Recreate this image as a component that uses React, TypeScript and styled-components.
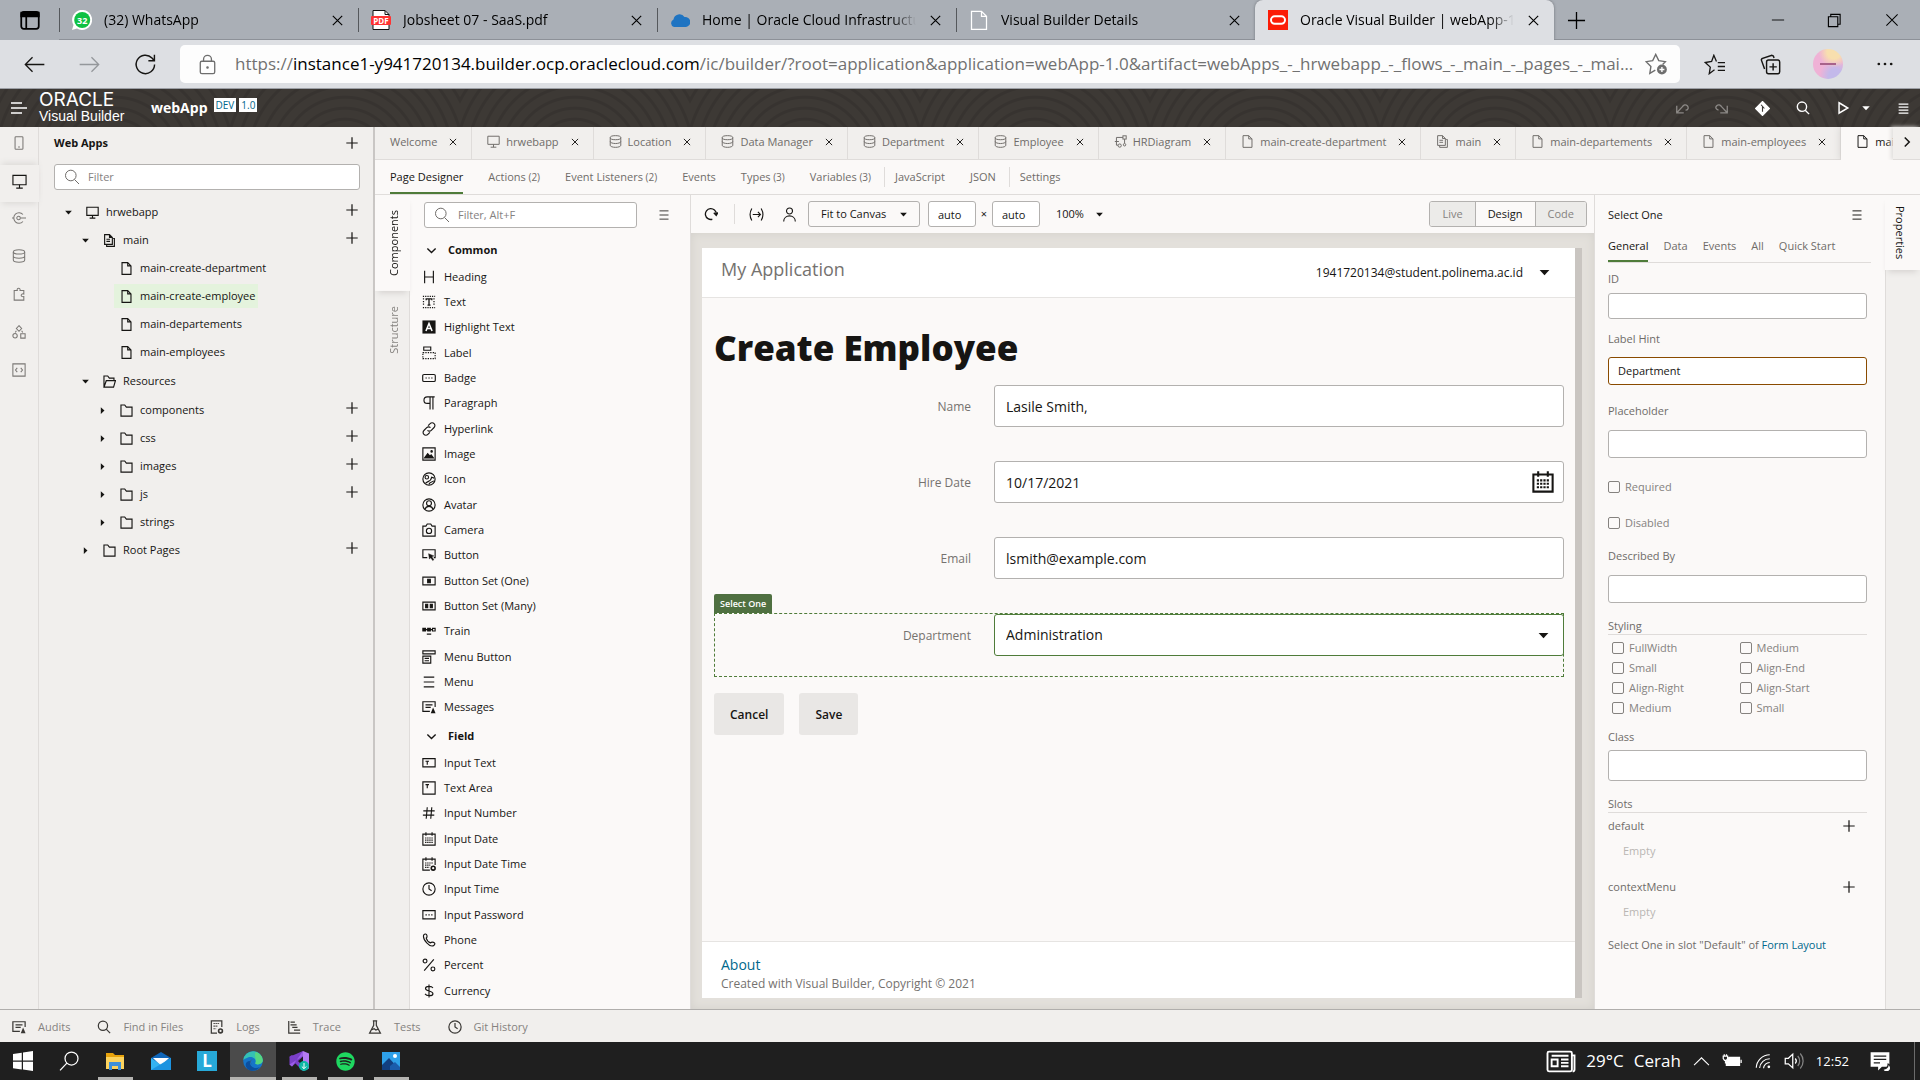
import React, { ReactNode } from "react";
import styled, { createGlobalStyle, css } from "styled-components";
import { FaSpotify } from "react-icons/fa";

const c = {
  ink: "#161513",
  muted: "#6f6c69",
  faint: "#b9b6b3",
  panel: "#f1efed",
  surface: "#fbf9f8",
  line: "#dfdcda",
  edge: "#b3b1af",
  green: "#4f7c3a",
  link: "#00688c",
  chrome: "#aaafb6",
  bar: "#dddfe3",
};

const Global = createGlobalStyle`
  *, *::before, *::after { box-sizing: border-box; }
  body { margin: 0; font: 11px/16px "Open Sans", "Noto Sans", sans-serif; color: ${c.ink}; }
  button, input, select { font: inherit; color: inherit; margin: 0; padding: 0; border: 0; background: none; border-radius: 0; outline: 0; }
  button { white-space: nowrap; }
  ul { list-style: none; margin: 0; padding: 0; }
  h1, h2, h3, p { margin: 0; font-weight: 400; font-size: inherit; }
  a { color: ${c.link}; text-decoration: none; }
  svg { display: block; flex: none; }
`;

/* ---------- icons ---------- */

const glyphs: Record<string, ReactNode> = {
  plus: <path d="M8 1.5v13M1.5 8h13" />,
  close: <path d="M3 3l10 10M13 3L3 13" />,
  caret: <path d="M2 5h12l-6 6.5z" fill="currentColor" stroke="none" />,
  caretRight: <path d="M5 2l6.500 6L5 14z" fill="currentColor" stroke="none" />,
  chevron: <path d="M2 5l6 6 6-6" />,
  chevronUp: <path d="M1 11.500l7-7 7 7" />,
  chevronRight: <path d="M5 2l6 6-6 6" />,
  search: <><circle cx="6.800" cy="6.500" r="5.300" /><path d="M10.500 10.500l4.500 4.500" /></>,
  menu: <path d="M2 2.500h12M2 6.200h12M2 9.900h12M2 13.600h12" />,
  menu3: <path d="M2 2.500h12M2 8h12M2 13.500h12" />,
  monitor: <><path d="M1 1.500h14v10H1z" /><path d="M8 11.500V15M4.500 15h7" /></>,
  tablet: <><rect x="3.500" y=".8" width="9" height="14.400" rx="1" /><path d="M7 12.500h2" /></>,
  file: <path d="M2.500.8h7l4 4v10.400h-11zM9.500.8v4h4" />,
  pages: <><path d="M4.500 13V15.200h9.500V5.500h-1.500" /><path d="M2 .8h6l3.500 3.500v8.500H2zM8 .8v3.500h3.500M4.200 6.500h4.500M4.200 9h4.500" /></>,
  folder: <path d="M1.200 15V1.200h4.600l2 2.600h7V15z" />,
  folderOpen: <path d="M1.200 15V1.200h4.600l2 2.600h5.700V7M1.200 15L4 7h11.300L13 15z" />,
  data: <><ellipse cx="8" cy="3.300" rx="6.500" ry="2.500" /><path d="M1.500 3.300v9.400c0 1.400 2.900 2.500 6.500 2.500s6.500-1.100 6.500-2.500V3.300M1.500 8c0 1.400 2.900 2.500 6.500 2.500s6.500-1.100 6.500-2.500" /></>,
  diagram: <><rect x="11" y="1" width="4" height="4" /><path d="M11 3H3v9.500h2M1 8h5" /><circle cx="7" cy="13" r="2" /><path d="M13 5v5" /><circle cx="13" cy="12" r="1.500" /></>,
  service: <><path d="M12.500 4A6 6 0 1 0 12.500 12" /><circle cx="7.500" cy="8" r="2" /><path d="M9.500 8H16M0 8h2" /></>,
  puzzle: <path d="M2.500 4H6c-1-3.500 4-3.500 3.200 0h4.300v4c-4-1-4 3.800 0 3V15h-11z" />,
  shapes: <><path d="M8 .8L11 4 8 7.200 5 4z" /><circle cx="3.500" cy="12.300" r="2.500" /><path d="M10 10h5v5h-5zM5 6.500L3.700 8.500M11 6.500L12.300 8.500" /></>,
  code: <><path d="M1 1h14v14H1z" /><path d="M6 5.500L4 8l2 2.500M10 5.500L12 8l-2 2.500" /></>,
  heading: <path d="M3 .8v14.400M13 .8v14.400M3 8h10" />,
  text: <><path d="M1 1.500h14M1 4.500h2M13 4.500h2M1 7.500h2M13 7.500h2M1 10.500h2M13 10.500h2M1 14.500h14" strokeDasharray="1.400 1.200" /><path d="M4.800 6V4.500h6.400V6M8 4.500v7M6.300 11.500h3.400" strokeWidth="1.500" /></>,
  highlight: <><path d="M.5.500h15v15H.5z" fill="currentColor" stroke="none" /><path d="M4.500 12.500L8 4l3.500 8.500M5.800 9.800h4.400" stroke="#fff" strokeWidth="1.800" /></>,
  label: <><path d="M2 1.200h8v3.600H2z" /><path d="M1 7.500h14v7H1z" strokeDasharray="1.500 1.300" /></>,
  badge: <><rect x=".8" y="4" width="14.400" height="8" rx="1.500" /><path d="M4 8h1.500M7.300 8h1.500M10.500 8H12" /></>,
  paragraph: <path d="M14.500 1H6a3.700 3.700 0 0 0 0 7.500h3M9.200 1v14.500M12.500 1v14.500" />,
  hyperlink: <path d="M7 4.200l2.300-2.300a3 3 0 0 1 4.500 0 3 3 0 0 1 0 4.400L10.600 9.500a3 3 0 0 1-4.300 0M9 11.800l-2.300 2.300a3 3 0 0 1-4.500 0 3 3 0 0 1 0-4.400l3.200-3.200a3 3 0 0 1 4.300 0" />,
  image: <><path d="M1 1h14v14H1z" /><path d="M3 12.500l3.500-5 2.500 3 1.500-1.500 2.500 3.500z" fill="currentColor" /><circle cx="11" cy="5" r=".8" fill="currentColor" /></>,
  iconGlyph: <><circle cx="8" cy="8" r="7" /><circle cx="5.500" cy="6" r="2" /><path d="M4 13c2-3 6-1 7-7l3 1M8 14c1-3 4-2 5.500-4" /></>,
  avatar: <><circle cx="8" cy="8" r="7" /><circle cx="8" cy="6" r="2.800" /><path d="M3.500 13c1-4.500 8-4.500 9 0" /></>,
  camera: <><path d="M1 3.500h3.500L6 1.200h4l1.500 2.300H15V15H1z" /><circle cx="8" cy="9" r="3" /></>,
  button: <><path d="M6 11H1V2h14v9h-1.500" /><path d="M7.500 6.500l6 2.500-2.300 1 2.300 3.500-1.300.8-2.200-3.300-1.500 1.700z" fill="currentColor" strokeWidth=".5" /></>,
  buttonOne: <><path d="M1 3.500h14v9H1z" /><path d="M6.500 6h3v4h-3z" fill="currentColor" /></>,
  buttonMany: <><path d="M1 3.500h14v9H1z" /><path d="M4.200 6h2.300v4H4.200zM9.500 6h2.300v4H9.500z" fill="currentColor" /></>,
  train: <><path d="M1 5h3v3H1zM6.500 5h3v3h-3z" fill="currentColor" /><path d="M4 6.500h8M12 5h3v3h-3zM5.500 11.500h5" /></>,
  menuButton: <><path d="M1 1h14v3.500H1zM1 7h9v8H1z" /><path d="M3 9.500h5M3 12.300h5" /></>,
  messages: <><path d="M15 8V2H1v11h8" /><path d="M4 5.500h8M4 8.500h6" /><path d="M12.700 8.500l2.800 6.500H10z" fill="currentColor" stroke="none" /></>,
  inputText: <><path d="M1 3h14v9.500H1z" /><path d="M4 6h4M6 6v4" /></>,
  textArea: <><path d="M1 1h14v14H1z" /><path d="M4 4.200h4M6 4.200v4" /></>,
  hash: <path d="M6 1.500l-1.200 13M11.200 1.500L10 14.500M1.500 5.500h13M1 10.500h13" />,
  calendar: <><path d="M1 2.500h14V15H1zM4.500.2v4M11.500.2v4" /><path d="M3.500 6.800h9M3.500 9.300h9M3.500 11.800h9" strokeDasharray="1.600 .8" /></>,
  calendarTime: <><path d="M9 15H1V2.500h14V9M4.500.2v4M11.500.2v4" /><path d="M3.500 6.800h9M3.500 9.300h6M3.500 11.800h5" strokeDasharray="1.600 .8" /><circle cx="12.800" cy="12.800" r="2.200" strokeWidth="1.800" /></>,
  clock: <><circle cx="8" cy="8" r="7" /><path d="M8 3.500V8l3 2" /></>,
  password: <><path d="M1 3h14v9.500H1z" /><path d="M4 7.800h1.500M7.300 7.800h1.500M10.500 7.800H12" /></>,
  phone: <path d="M2 2.200C3.500.5 5 1 5.500 2.500S5.800 5 4.800 5.800c.8 2.700 2.500 4.600 5 5.500.9-1.200 1.800-1.200 3.400-.6 1.600.6 2 1.700.6 3.300C9 17.500.200 7 2 2.200z" />,
  percent: <><circle cx="3.500" cy="3.500" r="2.200" /><circle cx="12.500" cy="12.500" r="2.200" /><path d="M13.500 1.500l-11 13" /></>,
  dollar: <path d="M12.500 4.500C11 2 4 2 4 5c0 3.500 8.500 2.500 8.500 6 0 3.200-7.500 3-9 .3M8 .5v15" />,
  refresh: <path d="M9.500 14A6.200 6.200 0 1 1 14 8M11.200 6.500L14 9.500l2-3.300" />,
  fit: <path d="M3 1.500c-2.300 4-2.300 9 0 13M13 1.500c2.300 4 2.300 9 0 13M4 8h8M9.500 5.300L12.200 8l-2.700 2.700" />,
  person: <><circle cx="8" cy="4.200" r="3.200" /><path d="M1.800 15.500c0-8 12.400-8 12.400 0" /></>,
  logs: <><path d="M8 15H1.500V1h12v7" /><path d="M4 4h7M4 7h5M4 10h3" strokeDasharray="1.500 .8" /><circle cx="12" cy="12.500" r="2.200" strokeWidth="1.800" /></>,
  trace: <path d="M2 1v14h13M4 2.500h5M4 5.500h7M6 8.500h6M8 11.500h7" />,
  flask: <><path d="M5.500 1h5M6.500 1v5L1.800 15h12.400L9.500 6V1" /><path d="M4.500 11l2.500-1 2 1.500 2.500-1" /></>,
  undo: <path d="M2 5.500V13.500h8M2.300 13.200L8 7c2-2.500 4-3.500 6-1.500s1 5-2 5" />,
  redo: <path d="M14 5.500V13.500H6M13.700 13.200L8 7C6 4.500 4 3.500 2 5.500S1 9.500 4 10.500" />,
  git: <><path d="M8 .5L15.500 8 8 15.500.500 8z" fill="currentColor" /><path d="M6.500 4l3.500 4M8 6v5.500" stroke="#3c3835" /></>,
  play: <path d="M3.500 2l10 6-10 6z" />,
  back: <path d="M15.500 8H1M6.500 2.500L1 8l5.500 5.500" />,
  forward: <path d="M.5 8H15M9.500 2.500L15 8l-5.500 5.500" />,
  reload: <path d="M14.300 8A6.400 6.400 0 1 1 12.500 3.500L14 5.200M14.200 1.200v4.200H10" />,
  lock: <><rect x="2.500" y="5.500" width="11" height="9.500" rx="1.200" /><path d="M5 5.500V4a3 3 0 0 1 6 0v1.500" /><circle cx="8" cy="10.300" r=".5" fill="currentColor" /></>,
  starPlus: <><path d="M7.500 12.500L3.500 14.800l.8-5L.8 6.300l4.800-.8L7.800 1 10 5.500l4.800.8-2 2" /><circle cx="12.300" cy="12" r="3.600" fill="currentColor" stroke="none" /><path d="M12.300 10.200v3.600M10.500 12h3.600" stroke="#fff" /></>,
  favorites: <path d="M8 12l-4 3 .8-5L1 6.500l4.800-.8L7.500 1l2 4.700M10.500 6.500H16M10.500 9.500H16M10.500 12.500H16" />,
  collections: <><path d="M3.500 11.500L1 4.500l.5-1L9 1l1.200.5.500 1.500" /><rect x="5" y="4.500" width="10" height="10.500" rx="1.500" /><path d="M10 7v5.500M7.200 9.800h5.600" /></>,
  dots: <><circle cx="2.500" cy="8" r="1.200" fill="currentColor" stroke="none" /><circle cx="8" cy="8" r="1.200" fill="currentColor" stroke="none" /><circle cx="13.500" cy="8" r="1.200" fill="currentColor" stroke="none" /></>,
  tabMenu: <><rect x="1" y="1.500" width="14" height="13.500" rx="2" /><path d="M1 2h14v3H1z" fill="currentColor" /><path d="M5 4v11" /></>,
  minimize: <path d="M1 8h14" />,
  restore: <path d="M1.500 4h10v10.500h-10zM4 4V1.500h10V12h-2.500" />,
  blank: <path d="M2 1h8l4 4v10.500H2zM10 1v4h4" />,
  news: <><rect x=".8" y="3" width="13" height="10.500" rx=".8" /><path d="M13.800 5h1.400v7.500c0 .7-.4 1-1 1M3 7.200h3.200v3.600H3zM8 7.200h4M8 9h4M8 10.800h4M3 5.200h9" /></>,
  battery: <><path d="M5.500 5h8.500v6.500H3.500V9z" fill="currentColor" /><path d="M15.300 7v2.500M1 4h3.500v2L3.500 7.500H2L1 6zM1.800 2.500V4M3.600 2.500V4M2.800 7.500V10" /></>,
  wifi: <><path d="M2 14A12 12 0 0 1 14 2.500M5 14.200A9 9 0 0 1 14 6M8.500 14.400A5.500 5.500 0 0 1 14 9.300" /><circle cx="13.200" cy="13.200" r="1.200" fill="currentColor" stroke="none" /></>,
  speaker: <><path d="M1 5.800h2.500L7 2.500v11L3.500 10.200H1z" /><path d="M9 6a3 3 0 0 1 0 4" /><path d="M11 4a6 6 0 0 1 0 8M13 2a9 9 0 0 1 0 12" opacity=".45" /></>,
  notice: <><path d="M.5 1h15v11.500H9.500L6.500 15.500v-3h-6z" fill="currentColor" stroke="none" /><path d="M3 4h10M3 6.700h10M3 9.400h5" stroke="#1f1f1f" /><path d="M14.500 10.500a3.300 3.300 0 1 1-4.500 3.800c2.500.5 4.500-1 4.500-3.800z" fill="currentColor" stroke="#1f1f1f" /></>,
  windows: <path d="M0 2.300L7 1.300v6.300H0zM8 1.200L16 0v7.600H8zM0 8.500h7v6.300L0 13.800zM8 8.500h8V16l-8-1.200z" fill="currentColor" stroke="none" />,
  taskSearch: <><circle cx="10" cy="6" r="5.200" /><path d="M6.300 9.700L.8 15.500" /></>,
};

const Icon = ({ name, size = 14, weight = 1.2 }: { name: string; size?: number; weight?: number }) => (
  <svg width={size} height={size} viewBox="0 0 16 16" fill="none" stroke="currentColor" strokeWidth={weight} aria-hidden="true">
    {glyphs[name]}
  </svg>
);

/* ---------- page frame ---------- */

const Page = styled.div`
  display: flex;
  flex-direction: column;
  height: 100vh;
  min-width: 1200px;
  overflow: hidden;
`;
const IconButton = styled.button<{ $w?: number; $color?: string }>`
  display: grid;
  place-items: center;
  flex: none;
  width: ${(p) => (p.$w ? `${p.$w}px` : "auto")};
  color: ${(p) => p.$color ?? "inherit"};
`;
const Spacer = styled.div`
  flex: 1;
`;

/* ---------- browser chrome ---------- */

const TabStrip = styled.div`
  display: flex;
  height: 40px;
  background: ${c.chrome};
  color: #000;
`;
const TabMenuCell = styled.div`
  display: flex;
  align-items: center;
  padding-left: 20px;
  width: 59px;
`;
const BrowserTab = styled.div<{ $active?: boolean }>`
  display: flex;
  align-items: center;
  gap: 12px;
  flex: 0 1 299px;
  min-width: 0;
  padding: 0 13px;
  font-size: 14px;
  line-height: 20px;
  box-shadow: inset 0 -1px 0 #8d9198;
  background: linear-gradient(#55585c, #55585c) 0 50% / 1px 24px no-repeat;
  ${(p) => p.$active && css`
    background: ${c.bar};
    border-radius: 8px 8px 0 0;
    box-shadow: 0 0 3px #6d7177;
  `}
`;
const BrowserTitle = styled.span`
  flex: 1;
  overflow: hidden;
  white-space: nowrap;
  mask-image: linear-gradient(to right, #000 calc(100% - 24px), transparent);
`;
const WindowButtons = styled.div`
  display: flex;
  flex: 1;
  justify-content: flex-end;
  box-shadow: inset 0 -1px 0 #8d9198;
`;
const AddressRow = styled.div`
  display: flex;
  align-items: center;
  height: 49px;
  padding: 0 7px;
  background: ${c.bar};
  position: relative;
  border-bottom: 1px solid #9c9fa5;
`;
const AddressBox = styled.div`
  display: flex;
  align-items: center;
  flex: 1;
  min-width: 0;
  height: 38px;
  margin: 0 7px;
  padding: 0 13px 0 17px;
  border-radius: 5px;
  background: #fdfdfd;
  color: #6e6e6e;
`;
const Url = styled.a`
  flex: 1;
  overflow: hidden;
  margin: 0 10px 0 17px;
  text-overflow: ellipsis;
  white-space: nowrap;
  font-size: 17px;
  line-height: 24px;
  color: #717171;
  b { font-weight: 400; color: #000; }
`;
const Portrait = styled.span`
  width: 30px;
  height: 30px;
  border-radius: 50%;
  background:
    linear-gradient(#a8628a, #a8628a) 50% 50% / 16px 2px no-repeat,
    radial-gradient(circle at 70% 10%, #f8dfae 0 20%, transparent 45%),
    radial-gradient(circle at 75% 90%, #c3b9ea 0 20%, transparent 45%),
    #efb2d6;
`;

const favicons = {
  whatsapp: (
    <svg width="20" height="20" viewBox="0 0 20 20"><path d="M0 20l1.500-5A10 10 0 1 1 5 18.500z" fill="#fff" /><circle cx="10.200" cy="10" r="8" fill="#0fc143" /><text x="10.200" y="13.500" fontSize="9" fontWeight="700" textAnchor="middle" fill="#fff" fontFamily="Open Sans, sans-serif">32</text></svg>
  ),
  pdf: (
    <svg width="20" height="20" viewBox="0 0 20 20"><path d="M2 .5h12l4 4v15H2z" fill="#fff" stroke="#111" /><path d="M14 .5v4h4" fill="none" stroke="#111" /><rect y="6" width="20" height="9" rx="1" fill="#f33" /><text x="10" y="13.500" fontSize="8" fontWeight="700" textAnchor="middle" fill="#fff" fontFamily="Open Sans, sans-serif">PDF</text></svg>
  ),
  cloud: (
    <svg width="20" height="20" viewBox="0 0 20 20"><path d="M4 17a4 4 0 0 1-.5-7.500A6 6 0 0 1 14.500 7 4.600 4.600 0 0 1 16 17z" fill="#1f74c2" /></svg>
  ),
  oracle: (
    <svg width="20" height="20" viewBox="0 0 20 20"><path d="M0 0h20v20H0z" fill="#fb1c07" /><rect x="3" y="6.300" width="14" height="7.500" rx="3.700" fill="none" stroke="#fff" strokeWidth="2" /></svg>
  ),
};

const browserTabs: { title: string; icon: ReactNode; active?: boolean }[] = [
  { title: "(32) WhatsApp", icon: favicons.whatsapp },
  { title: "Jobsheet 07 - SaaS.pdf", icon: favicons.pdf },
  { title: "Home | Oracle Cloud Infrastructure", icon: favicons.cloud },
  { title: "Visual Builder Details", icon: <IconButton as="span" $color="#fff"><Icon name="blank" size={20} weight={1} /></IconButton> },
  { title: "Oracle Visual Builder | webApp-1.0", icon: favicons.oracle, active: true },
];

const Browser = () => (
  <header>
    <TabStrip>
      <TabMenuCell><IconButton aria-label="Tab actions"><Icon name="tabMenu" size={20} weight={1.4} /></IconButton></TabMenuCell>
      {browserTabs.map((t) => (
        <BrowserTab key={t.title} $active={t.active}>
          {t.icon}
          <BrowserTitle>{t.title}</BrowserTitle>
          <IconButton aria-label={`Close ${t.title}`}><Icon name="close" size={15} /></IconButton>
        </BrowserTab>
      ))}
      <WindowButtons>
        <IconButton $w={44} aria-label="New tab"><Icon name="plus" size={21} weight={1} /></IconButton>
        <Spacer />
        <IconButton $w={57} aria-label="Minimize"><Icon name="minimize" weight={1} /></IconButton>
        <IconButton $w={57} aria-label="Restore"><Icon name="restore" size={15} /></IconButton>
        <IconButton $w={57} aria-label="Close window"><Icon name="close" size={18} weight={0.9} /></IconButton>
      </WindowButtons>
    </TabStrip>
    <AddressRow>
      <IconButton $w={55} aria-label="Back"><Icon name="back" size={21} weight={1} /></IconButton>
      <IconButton $w={55} $color="#94979b" aria-label="Forward"><Icon name="forward" size={21} weight={1} /></IconButton>
      <IconButton $w={56} aria-label="Reload"><Icon name="reload" size={23} weight={1} /></IconButton>
      <AddressBox>
        <Icon name="lock" size={21} weight={1} />
        <Url href="#">https://<b>instance1-y941720134.builder.ocp.oraclecloud.com</b>/ic/builder/?root=application&amp;application=webApp-1.0&amp;artifact=webApps_-_hrwebapp_-_flows_-_main_-_pages_-_main-create-employee</Url>
        <IconButton aria-label="Add to favorites"><Icon name="starPlus" size={22} weight={1} /></IconButton>
      </AddressBox>
      <IconButton $w={55} aria-label="Favorites"><Icon name="favorites" size={21} weight={1} /></IconButton>
      <IconButton $w={57} aria-label="Collections"><Icon name="collections" size={21} weight={1.1} /></IconButton>
      <IconButton $w={57} aria-label="Profile"><Portrait /></IconButton>
      <IconButton $w={57} aria-label="More"><Icon name="dots" size={18} /></IconButton>
    </AddressRow>
  </header>
);

/* ---------- application header ---------- */

const AppHeader = styled.header`
  display: flex;
  align-items: center;
  height: 38px;
  padding: 0 10px 0 11px;
  color: #fff;
  background:
    repeating-radial-gradient(circle at 50% 190%, transparent 0 7px, rgba(0, 0, 0, 0.1) 8px 10px, transparent 11px) 0 0 / 230px 100%,
    #3d3935;
`;
const Brand = styled.div`
  display: flex;
  flex-direction: column;
  width: 112px;
  margin-left: 12px;
  font-family: "Liberation Sans", Arial, sans-serif;
  font-size: 14px;
  line-height: 16px;
`;
const BrandName = styled.span`
  font-family: Inter, sans-serif;
  font-size: 19px;
  font-weight: 400;
`;
const AppName = styled.h1`
  font-size: 14px;
  line-height: 20px;
  font-weight: 700;
`;
const Tag = styled.span`
  align-self: flex-start;
  margin: 9px 0 0 3px;
  padding: 0 2px;
  background: #fff;
  color: ${c.link};
  font-size: 10px;
  line-height: 14px;
`;
const TagRow = styled.div`
  display: flex;
  align-self: stretch;
  padding-left: 3px;
`;
const HeaderTools = styled.div`
  display: flex;
  align-items: center;
  gap: 26px;
`;
const PlayTools = styled.div`
  display: flex;
  align-items: center;
  gap: 11px;
`;

const Header = () => (
  <AppHeader>
    <IconButton aria-label="Navigation"><svg width="16" height="12" viewBox="0 0 16 12" stroke="#fff" strokeWidth="1.600"><path d="M0 1h11M0 6h16M0 11h11" /></svg></IconButton>
    <Brand><BrandName>ORACLE</BrandName>Visual Builder</Brand>
    <AppName>webApp</AppName>
    <TagRow><Tag>DEV</Tag><Tag>1.0</Tag></TagRow>
    <Spacer />
    <HeaderTools>
      <IconButton $color="#8b8885" aria-label="Undo"><Icon name="undo" weight={1.500} /></IconButton>
      <IconButton $color="#8b8885" aria-label="Redo"><Icon name="redo" weight={1.500} /></IconButton>
      <IconButton aria-label="Git"><Icon name="git" size={15} /></IconButton>
      <IconButton aria-label="Search"><Icon name="search" weight={1.600} /></IconButton>
      <PlayTools>
        <IconButton aria-label="Preview"><Icon name="play" weight={1.700} /></IconButton>
        <IconButton aria-label="Preview options"><Icon name="caret" size={10} /></IconButton>
      </PlayTools>
      <IconButton aria-label="Menu"><Icon name="menu" size={13} weight={1.500} /></IconButton>
    </HeaderTools>
  </AppHeader>
);

/* ---------- shared parts ---------- */

const FieldBox = styled.label<{ $h?: number; $accent?: boolean }>`
  display: flex;
  align-items: center;
  gap: 8px;
  flex: none;
  height: ${(p) => p.$h ?? 26}px;
  padding: 0 9px;
  border: 1px solid ${(p) => (p.$accent ? "#8a4b00" : c.edge)};
  border-radius: 3px;
  background: #fff;
  color: ${c.muted};
`;
const TextInput = styled.input`
  flex: 1;
  min-width: 0;
  width: 100%;
  color: ${c.ink};
  &::placeholder { color: #85827f; opacity: 1; }
`;

/* ---------- navigator ---------- */

const Workspace = styled.div`
  display: flex;
  flex: 1;
  min-height: 0;
  background: ${c.panel};
`;
const Rail = styled.nav`
  display: flex;
  flex-direction: column;
  width: 39px;
  border-right: 1px solid ${c.line};
`;
const RailButton = styled.button<{ $active?: boolean }>`
  display: grid;
  place-items: center;
  height: 38px;
  width: 38px;
  padding-bottom: 7px;
  color: ${(p) => (p.$active ? c.ink : "#7b7875")};
  ${(p) => p.$active && css`
    width: 39px;
    height: 37px;
    padding-bottom: 4px;
    background: ${c.panel};
    box-shadow: 0 -4px 6px -2px #dcdad8, 0 4px 6px -2px #dcdad8;
  `}
`;
const Navigator = styled.aside`
  width: 336px;
  padding: 0 13px 0 15px;
  border-right: 2px solid #c9c6c4;
`;
const NavTitle = styled.div`
  display: flex;
  align-items: center;
  justify-content: space-between;
  height: 37px;
  padding: 0 1px 5px 0;
  h2 { font-weight: 700; }
`;
const Tree = styled.ul`
  padding-top: 8px;
`;
const Files = styled.ul`
  padding-bottom: 1px;
`;
const Folders = styled.ul`
  padding-top: 1px;
`;
const TreeRow = styled.div<{ $depth: number }>`
  display: flex;
  align-items: center;
  height: 28px;
  padding-left: ${(p) => 8 + p.$depth * 17}px;
  padding-right: 1px;
  > button:last-child:not(:nth-child(2)) { padding-bottom: 4px; }
`;
const Twisty = styled.span`
  display: grid;
  place-items: center;
  width: 12px;
  margin-right: 6px;
`;
const TreeLabel = styled.button<{ $on?: boolean }>`
  display: flex;
  align-items: center;
  gap: 7px;
  height: 24px;
  padding: 0 3px 0 6px;
  background: ${(p) => (p.$on ? "#e4f3dd" : "none")};
`;

type Node = { label: string; icon: string; depth: number; open?: boolean; leaf?: boolean; add?: boolean; on?: boolean };
const Row = ({ n }: { n: Node }) => (
  <TreeRow $depth={n.depth}>
    <Twisty>{!n.leaf && <Icon name={n.open ? "caret" : "caretRight"} size={9} />}</Twisty>
    <TreeLabel $on={n.on}><Icon name={n.icon} size={13} weight={1.4} />{n.label}</TreeLabel>
    <Spacer />
    {n.add && <IconButton aria-label={`Add to ${n.label}`}><Icon name="plus" weight={1.4} /></IconButton>}
  </TreeRow>
);
const files = ["main-create-department", "main-create-employee", "main-departements", "main-employees"];
const folders = ["components", "css", "images", "js", "strings"];
const railIcons = ["tablet", "monitor", "service", "data", "puzzle", "shapes", "code"];

const LeftSide = () => (
  <>
    <Rail aria-label="Artifacts">
      {railIcons.map((r) => <RailButton key={r} $active={r === "monitor"} aria-label={r}><Icon name={r} size={r === "monitor" ? 15 : 14} /></RailButton>)}
    </Rail>
    <Navigator>
      <NavTitle><h2>Web Apps</h2><IconButton aria-label="Add web app"><Icon name="plus" weight={1.4} /></IconButton></NavTitle>
      <FieldBox><Icon name="search" size={16} weight={1} /><TextInput placeholder="Filter" aria-label="Filter web apps" /></FieldBox>
      <Tree>
        <li><Row n={{ label: "hrwebapp", icon: "monitor", depth: 0, open: true, add: true }} /></li>
        <li>
          <Row n={{ label: "main", icon: "pages", depth: 1, open: true, add: true }} />
          <Files>{files.map((f) => <li key={f}><Row n={{ label: f, icon: "file", depth: 2, leaf: true, on: f === "main-create-employee" }} /></li>)}</Files>
        </li>
        <li>
          <Row n={{ label: "Resources", icon: "folderOpen", depth: 1, open: true }} />
          <Folders>{folders.map((f) => <li key={f}><Row n={{ label: f, icon: "folder", depth: 2, add: f !== "strings" }} /></li>)}</Folders>
        </li>
        <li><Row n={{ label: "Root Pages", icon: "folder", depth: 1, add: true }} /></li>
      </Tree>
    </Navigator>
  </>
);

/* ---------- editor tabs ---------- */

const Editor = styled.main`
  display: flex;
  flex-direction: column;
  flex: 1;
  min-width: 0;
`;
const FileTabs = styled.div`
  display: flex;
  height: 33px;
`;
const FileTabScroll = styled.div`
  display: flex;
  flex: 1;
  min-width: 0;
  overflow: hidden;
`;
const FileTab = styled.div<{ $active?: boolean }>`
  display: flex;
  align-items: center;
  flex: none;
  gap: 6px;
  padding: 0 13px 3px 15px;
  border-right: 1px solid ${c.line};
  border-bottom: 1px solid ${c.line};
  color: ${c.muted};
  button { margin-left: 5px; color: ${c.ink}; }
  ${(p) => p.$active && css`
    background: ${c.surface};
    color: ${c.ink};
    border-color: transparent;
    box-shadow: 0 0 8px #cfccca;
  `}
`;
const TabsMore = styled.button`
  display: grid;
  place-items: center;
  width: 27px;
  padding-bottom: 3px;
  border-bottom: 1px solid ${c.line};
  box-shadow: -2px 0 4px #e0dedc;
`;
const SubTabs = styled.div`
  display: flex;
  align-items: stretch;
  gap: 25px;
  height: 35px;
  padding-left: 15px;
  background: ${c.surface};
  border-bottom: 1px solid ${c.line};
`;
const SubTab = styled.button<{ $active?: boolean }>`
  padding-top: 2px;
  color: ${(p) => (p.$active ? c.ink : c.muted)};
  border-bottom: 2px solid ${(p) => (p.$active ? c.green : "transparent")};
  small { font-size: 10px; }
`;
const Group = styled.div`
  display: flex;
  gap: 25px;
  &:not(:first-child) { background: linear-gradient(${c.line}, ${c.line}) 0 50% / 1px 20px no-repeat; margin-left: -12px; padding-left: 11px; }
`;

const fileTabs: [string, string?][] = [
  ["Welcome"], ["hrwebapp", "monitor"], ["Location", "data"], ["Data Manager", "data"], ["Department", "data"], ["Employee", "data"],
  ["HRDiagram", "diagram"], ["main-create-department", "file"], ["main", "pages"], ["main-departements", "file"], ["main-employees", "file"], ["main-create-employee", "file"],
];
const subTabs: [string, string?][][] = [
  [["Page Designer"], ["Actions", "(2)"], ["Event Listeners", "(2)"], ["Events"], ["Types", "(3)"], ["Variables", "(3)"]],
  [["JavaScript"], ["JSON"]],
  [["Settings"]],
];

/* ---------- component palette ---------- */

const Body = styled.div`
  display: flex;
  flex: 1;
  min-height: 0;
`;
const SideTabs = styled.div<{ $right?: boolean }>`
  display: flex;
  flex-direction: column;
  flex: none;
  width: 35px;
  background: linear-gradient(${c.line}, ${c.line}) ${(p) => (p.$right ? "0" : "100%")} 0 / 1px 100% no-repeat, ${c.panel};
`;
const SideTab = styled.button<{ $active?: boolean; $flip?: boolean }>`
  writing-mode: vertical-rl;
  transform: ${(p) => (p.$flip ? "rotate(180deg)" : "none")};
  display: flex;
  align-items: center;
  padding: ${(p) => (p.$flip ? "15px 3px 15px 0" : "11px 5px 11px 0")};
  color: ${(p) => (p.$active ? c.ink : "#85827f")};
  ${(p) => p.$active && css`
    background: ${c.surface};
    box-shadow: 0 ${p.$flip ? "-5px" : "5px"} 6px -3px #d5d2d0;
  `}
`;
const Palette = styled.section`
  display: flex;
  flex-direction: column;
  flex: none;
  width: 281px;
  padding: 7px 0 0 12px;
  overflow: hidden;
  background: ${c.surface};
  border-right: 1px solid ${c.line};
`;
const PaletteSearch = styled.div`
  display: flex;
  align-items: center;
  padding-left: 2px;
  > label { width: 213px; }
  > button { margin-left: 21px; color: #3a3835; }
`;
const PaletteGroup = styled.h3`
  display: flex;
  align-items: center;
  gap: 11px;
  flex: none;
  height: 28px;
  margin-top: 2px;
  padding-left: 4px;
  font-weight: 700;
  &:first-of-type { margin-top: 8px; }
`;
const PaletteItem = styled.li`
  display: flex;
  align-items: center;
  gap: 8px;
  height: 25px;
  &:nth-child(3n) { height: 26px; }
`;
const palette: [string, [string, string][]][] = [
  ["Common", [
    ["Heading", "heading"], ["Text", "text"], ["Highlight Text", "highlight"], ["Label", "label"], ["Badge", "badge"], ["Paragraph", "paragraph"],
    ["Hyperlink", "hyperlink"], ["Image", "image"], ["Icon", "iconGlyph"], ["Avatar", "avatar"], ["Camera", "camera"], ["Button", "button"],
    ["Button Set (One)", "buttonOne"], ["Button Set (Many)", "buttonMany"], ["Train", "train"], ["Menu Button", "menuButton"], ["Menu", "menu3"], ["Messages", "messages"],
  ]],
  ["Field", [
    ["Input Text", "inputText"], ["Text Area", "textArea"], ["Input Number", "hash"], ["Input Date", "calendar"], ["Input Date Time", "calendarTime"],
    ["Input Time", "clock"], ["Input Password", "password"], ["Phone", "phone"], ["Percent", "percent"], ["Currency", "dollar"],
  ]],
];

/* ---------- canvas ---------- */

const CanvasColumn = styled.section`
  display: flex;
  flex-direction: column;
  flex: 1;
  min-width: 0;
`;
const Toolbar = styled.div`
  display: flex;
  align-items: center;
  height: 38px;
  padding: 0 7px 0 4px;
  background: ${c.surface};
`;
const Divider = styled.span`
  width: 1px;
  height: 20px;
  margin: 0 7px;
  background: ${c.line};
`;
const Dropdown = styled.div<{ $framed?: boolean; $w: number }>`
  display: grid;
  align-items: center;
  width: ${(p) => p.$w}px;
  height: 26px;
  border: 1px solid ${(p) => (p.$framed ? c.edge : "transparent")};
  border-radius: 3px;
  > * { grid-area: 1 / 1; }
  > svg { justify-self: end; margin-right: 11px; pointer-events: none; }
  select { appearance: none; width: 100%; height: 100%; padding-left: ${(p) => (p.$framed ? 12 : 15)}px; }
`;
const SizeInputs = styled.div`
  display: flex;
  align-items: center;
  margin-left: 8px;
`;
const SizeInput = styled.input`
  width: 48px;
  height: 26px;
  padding-left: 9px;
  border: 1px solid ${c.edge};
  border-radius: 3px;
  background: #fff;
`;
const Times = styled.span`
  width: 16px;
  text-align: center;
`;
const Segments = styled.div`
  display: flex;
  height: 26px;
  border: 1px solid ${c.edge};
  border-radius: 3px;
  overflow: hidden;
`;
const Segment = styled.button<{ $on?: boolean }>`
  padding: 0 12px;
  background: ${(p) => (p.$on ? c.surface : "#ecebe9")};
  color: ${(p) => (p.$on ? c.ink : "#85827f")};
  & + & { border-left: 1px solid ${c.edge}; }
`;
const Stage = styled.div`
  display: flex;
  flex: 1;
  min-height: 0;
  padding: 15px 12px 11px 11px;
  background: #e3e0db;
  box-shadow: inset 0 0 10px #d3d0cb;
`;
const AppFrame = styled.div`
  display: flex;
  flex-direction: column;
  flex: 1;
  background: ${c.surface};
  border-right: 7px solid #c9c5c1;
`;
const FrameTop = styled.div`
  display: flex;
  align-items: center;
  justify-content: space-between;
  height: 50px;
  padding: 0 24px 0 19px;
  background: #fff;
  border-bottom: 1px solid #e6e4e2;
  font-size: 12px;
  h2 { font-size: 18px; line-height: 24px; color: #75726f; padding-bottom: 8px; }
  button { display: flex; align-items: center; gap: 15px; }
`;
const Form = styled.form`
  display: flex;
  flex-direction: column;
  flex: 1;
  padding: 26px 11px 0 12px;
  h1 { margin-bottom: 13px; font-size: 35px; line-height: 48px; font-weight: 800; }
`;
const FormRow = styled.div<{ $selected?: boolean }>`
  position: relative;
  display: grid;
  grid-template-columns: minmax(100px, 257px) 1fr;
  column-gap: 23px;
  align-items: center;
  height: 42px;
  margin-bottom: 34px;
  > label { padding-top: 2px; text-align: right; font-size: 12px; color: #75726f; }
  ${(p) => p.$selected && css`
    height: 64px;
    padding: 1px 0 21px;
    margin-bottom: 16px;
    outline: 1px dashed ${c.green};
    outline-offset: -1px;
  `}
`;
const Control = styled.div<{ $on?: boolean }>`
  display: grid;
  align-items: center;
  height: 42px;
  border: 1px solid ${(p) => (p.$on ? c.green : c.edge)};
  border-radius: 3px;
  background: #fff;
  font-size: 14px;
  > * { grid-area: 1 / 1; }
  input, select { appearance: none; width: 100%; height: 100%; padding-left: 11px; }
  > svg, > button { justify-self: end; margin-right: 9px; }
  > svg { margin-right: 13px; pointer-events: none; }
`;
const SelectionTag = styled.span`
  position: absolute;
  left: 0;
  bottom: 100%;
  padding: 0 6px;
  border-radius: 2px 2px 0 0;
  background: #4f7041;
  color: #fff;
  font-size: 9px;
  line-height: 19px;
  font-weight: 600;
`;
const Actions = styled.div`
  display: flex;
  gap: 15px;
  button { height: 42px; padding: 2px 16px 0; border-radius: 3px; background: #e9e7e5; font-size: 12px; font-weight: 600; }
`;
const FrameFooter = styled.footer`
  height: 57px;
  padding: 13px 19px 0;
  background: #fff;
  border-top: 1px solid #e6e4e2;
  font-size: 12px;
  line-height: 19px;
  color: #75726f;
  a { display: block; font-size: 14px; }
`;

/* ---------- property inspector ---------- */

const Inspector = styled.aside`
  flex: none;
  width: 291px;
  padding: 0 18px 0 13px;
  background: ${c.surface};
  border-left: 1px solid ${c.line};
  color: ${c.muted};
`;
const InspectorTitle = styled.div`
  display: flex;
  align-items: center;
  justify-content: space-between;
  height: 38px;
  padding: 2px 4px 0 0;
  color: ${c.ink};
`;
const InspectorTabs = styled.div`
  display: flex;
  gap: 15px;
  height: 30px;
  margin-right: -4px;
  border-bottom: 1px solid ${c.line};
  color: #85827f;
  button { padding: 0 0 1px; }
`;
const Property = styled.div<{ $top: number; $gap: number }>`
  display: flex;
  flex-direction: column;
  gap: ${(p) => p.$gap}px;
  padding-top: ${(p) => p.$top}px;
`;
const Check = styled.label`
  display: flex;
  align-items: center;
  gap: 5px;
  color: #85827f;
  input { appearance: none; width: 12px; height: 12px; border: 1px solid #85827f; border-radius: 2px; }
`;
const CheckStack = styled.div`
  display: grid;
  gap: 20px;
  padding: 21px 0 17px;
`;
const CheckGrid = styled.div`
  display: grid;
  grid-template-columns: 1fr 1fr;
  row-gap: 4px;
  padding: 5px 0 5px 4px;
`;
const Section = styled.h3`
  margin-top: 15px;
  border-bottom: 1px solid ${c.line};
`;
const Slot = styled.div`
  padding-bottom: 15px;
  > div { display: flex; justify-content: space-between; align-items: center; height: 25px; padding-right: 11px; color: ${c.ink}; }
  > div > span { color: ${c.muted}; }
  p { padding: 5px 0 0 15px; color: ${c.faint}; }
`;
const SlotNote = styled.p`
  padding-top: 2px;
`;

const styles = ["FullWidth", "Medium", "Small", "Align-End", "Align-Right", "Align-Start", "Medium", "Small"];
const Field = ({ label, top, gap, h, value, accent }: { label: string; top: number; gap: number; h?: number; value?: string; accent?: boolean }) => (
  <Property $top={top} $gap={gap}>
    <label htmlFor={label}>{label}</label>
    <FieldBox as="div" $h={h} $accent={accent}><TextInput id={label} defaultValue={value} /></FieldBox>
  </Property>
);

const Properties = () => (
  <Inspector>
    <InspectorTitle><h2>Select One</h2><IconButton aria-label="Inspector menu"><Icon name="menu3" size={12} weight={1.3} /></IconButton></InspectorTitle>
    <InspectorTabs>
      {["General", "Data", "Events", "All", "Quick Start"].map((t, i) => <SubTab key={t} $active={i === 0}>{t}</SubTab>)}
    </InspectorTabs>
    <Field label="ID" top={8} gap={6} />
    <Field label="Label Hint" top={12} gap={10} h={28} value="Department" accent />
    <Field label="Placeholder" top={18} gap={11} h={28} />
    <CheckStack>
      <Check><input type="checkbox" />Required</Check>
      <Check><input type="checkbox" />Disabled</Check>
    </CheckStack>
    <Field label="Described By" top={0} gap={11} h={28} />
    <Section>Styling</Section>
    <CheckGrid>{styles.map((s, i) => <Check key={i}><input type="checkbox" />{s}</Check>)}</CheckGrid>
    <Field label="Class" top={8} gap={5} h={31} />
    <Section>Slots</Section>
    <Slot><div><span>default</span><IconButton aria-label="Add to default"><Icon name="plus" weight={1.4} /></IconButton></div><p>Empty</p></Slot>
    <Slot><div><span>contextMenu</span><IconButton aria-label="Add to contextMenu"><Icon name="plus" weight={1.4} /></IconButton></div><p>Empty</p></Slot>
    <SlotNote>Select One in slot "Default" of <a href="#">Form Layout</a></SlotNote>
  </Inspector>
);

const Canvas = () => (
  <CanvasColumn>
    <Toolbar>
      <IconButton $w={32} aria-label="Reload page"><Icon name="refresh" weight={1.5} /></IconButton>
      <Divider />
      <IconButton $w={28} aria-label="Fit width"><Icon name="fit" size={15} /></IconButton>
      <IconButton $w={38} aria-label="Sign in as"><Icon name="person" size={15} /></IconButton>
      <Dropdown $framed $w={112}><select aria-label="Canvas size"><option>Fit to Canvas</option></select><Icon name="caret" size={9} /></Dropdown>
      <SizeInputs>
        <SizeInput aria-label="Width" defaultValue="auto" />
        <Times>×</Times>
        <SizeInput aria-label="Height" defaultValue="auto" />
      </SizeInputs>
      <Dropdown $w={76}><select aria-label="Zoom"><option>100%</option></select><Icon name="caret" size={9} /></Dropdown>
      <Spacer />
      <Segments><Segment>Live</Segment><Segment $on>Design</Segment><Segment>Code</Segment></Segments>
    </Toolbar>
    <Stage>
      <AppFrame>
        <FrameTop><h2>My Application</h2><button>1941720134@student.polinema.ac.id<Icon name="caret" size={13} /></button></FrameTop>
        <Form onSubmit={(e) => e.preventDefault()}>
          <h1>Create Employee</h1>
          <FormRow><label htmlFor="name">Name</label><Control><input id="name" defaultValue="Lasile Smith," /></Control></FormRow>
          <FormRow>
            <label htmlFor="hire">Hire Date</label>
            <Control><input id="hire" defaultValue="10/17/2021" /><IconButton type="button" aria-label="Choose date"><Icon name="calendar" size={22} weight={1.5} /></IconButton></Control>
          </FormRow>
          <FormRow><label htmlFor="email">Email</label><Control><input id="email" defaultValue="lsmith@example.com" /></Control></FormRow>
          <FormRow $selected>
            <SelectionTag>Select One</SelectionTag>
            <label htmlFor="dept">Department</label>
            <Control $on><select id="dept"><option>Administration</option></select><Icon name="caret" size={13} /></Control>
          </FormRow>
          <Actions><button type="button">Cancel</button><button type="submit">Save</button></Actions>
        </Form>
        <FrameFooter><a href="#">About</a>Created with Visual Builder, Copyright © 2021</FrameFooter>
      </AppFrame>
    </Stage>
  </CanvasColumn>
);

/* ---------- status bar and taskbar ---------- */

const StatusBar = styled.footer`
  display: flex;
  align-items: center;
  gap: 27px;
  height: 33px;
  padding: 2px 12px 0;
  border-top: 1px solid #b0aeac;
  background: ${c.panel};
  color: #85827f;
  button { display: flex; align-items: center; gap: 12px; }
  svg { color: #3a3835; }
`;
const Taskbar = styled.footer`
  display: flex;
  height: 38px;
  background: #1f1f1f;
  color: #fff;
  font-size: 17px;
`;
const Task = styled.button<{ $run?: boolean; $active?: boolean }>`
  display: grid;
  place-items: center;
  width: 46px;
  background:
    linear-gradient(#b5b4b1, #b5b4b1) 50% 100% / ${(p) => (p.$active ? "46px" : "35px")} ${(p) => (p.$run ? "3px" : "0")} no-repeat,
    ${(p) => (p.$active ? "#4b4b4b" : "transparent")};
`;
const Tray = styled.div`
  display: flex;
  flex: 1;
  align-items: center;
  justify-content: flex-end;
  gap: 12px;
  padding-right: 5px;
  line-height: 24px;
  > time { font-size: 13px; }
`;
const Weather = styled.div`
  display: flex;
  align-items: center;
  gap: 10px;
`;
const PeekLine = styled.span`
  align-self: stretch;
  width: 1px;
  margin-left: 12px;
  background: #6b6b6b;
`;
const NoticeButton = styled.button`
  margin-left: 9px;
`;

const art = {
  explorer: <svg width="20" height="20" viewBox="0 0 20 20"><path d="M1 2h7l2 2h9v4H1z" fill="#e8a30c" /><path d="M1 6h18v12H1z" fill="#fcd35e" /><path d="M4 11h12v8h-3v-4H7v4H4z" fill="#3f8fd8" /></svg>,
  mail: <svg width="20" height="20" viewBox="0 0 20 20"><path d="M0 7l10-6 10 6v12H0z" fill="#0f65b8" /><path d="M2 7h16l-8 8z" fill="#eef6fb" /><path d="M0 7l10 7 10-7v12H0z" fill="#34b3f1" /><path d="M20 7v12H0z" fill="#1c93e0" /><path d="M2.500 7h15L10 12.500z" fill="#fff" /></svg>,
  edge: <svg width="20" height="20" viewBox="0 0 20 20"><circle cx="10" cy="10" r="9.800" fill="#1675c9" /><path d="M.3 9A9.800 9.800 0 0 1 19.800 9c.2 3-2 4.500-5 4.500-2 0-3-.8-2.300-1.800C14 8 9 5 5 6.500 2.500 7.300 1 8.500.3 9z" fill="#35c1b4" /><path d="M13 1a9.800 9.800 0 0 1 6.800 8c.2 3-2 4.500-5 4.500-2 0-3-.8-2.300-1.800C14 8 10 4 13 1z" fill="#5fdc74" opacity=".8" /><path d="M7 10c-1 5 4 9 10 6-3 4-9 5-12.500 2C1 14 3 10 7 10z" fill="#0c4f9e" /><path d="M10.500 8a3 3 0 0 0-1.500 5.500c-2-1-3-5 1.500-5.500z" fill="#4b4b4b" /></svg>,
  studio: <svg width="20" height="20" viewBox="0 0 20 20"><path d="M14 0l6 2.500v15L14 20z" fill="#b57bf5" /><path d="M14 0v5.500L3 15.500.500 13.500v-8L3 4l11 11V20L0 6z" fill="#7a3fc9" /><path d="M14 0L3 15.500.500 13.500 14 5z" fill="#9c5fe8" /><circle cx="15" cy="15" r="5" fill="#0db8a5" /><path d="M15 12v5.500M12.800 15.500l2.200 2.200 2.200-2.200" stroke="#fff" fill="none" /></svg>,
  photos: <svg width="18" height="18" viewBox="0 0 18 18"><path d="M0 0h18v18H0z" fill="#2ea0e8" /><path d="M0 13l7-7 11 12H0z" fill="#123f80" /><path d="M8 14l5-4 5 5v3H8z" fill="#1b5cab" /><circle cx="13" cy="4" r="2" fill="#fff" /></svg>,
  line: <svg width="20" height="20" viewBox="0 0 20 20"><path d="M0 0h20v20H0z" fill="#27a9d8" /><text x="10" y="16" fontSize="17" fontWeight="700" textAnchor="middle" fill="#fff" fontFamily="Open Sans, sans-serif">L</text></svg>,
};

const SideLabel = ({ children, active, flip }: { children: ReactNode; active?: boolean; flip?: boolean }) => (
  <SideTab $active={active} $flip={flip}>{children}</SideTab>
);

export default function App() {
  return (
    <Page>
      <Global />
      <Browser />
      <Header />
      <Workspace>
        <LeftSide />
        <Editor>
          <FileTabs>
            <FileTabScroll>
              {fileTabs.map(([label, icon], i) => (
                <FileTab key={label} $active={i === fileTabs.length - 1}>
                  {icon && <Icon name={icon} size={13} />}
                  {label}
                  <IconButton aria-label={`Close ${label}`}><Icon name="close" size={10} weight={1.500} /></IconButton>
                </FileTab>
              ))}
            </FileTabScroll>
            <TabsMore aria-label="More tabs"><Icon name="chevronRight" size={12} weight={2} /></TabsMore>
          </FileTabs>
          <SubTabs>
            {subTabs.map((g, gi) => (
              <Group key={gi}>
                {g.map(([label, count], i) => (
                  <SubTab key={label} $active={gi === 0 && i === 0}>{label}{count && <small> {count}</small>}</SubTab>
                ))}
              </Group>
            ))}
          </SubTabs>
          <Body>
            <SideTabs>
              <SideLabel active flip>Components</SideLabel>
              <SideLabel flip>Structure</SideLabel>
            </SideTabs>
            <Palette>
              <PaletteSearch>
                <FieldBox><Icon name="search" size={16} weight={1} /><TextInput placeholder="Filter, Alt+F" aria-label="Filter components" /></FieldBox>
                <IconButton aria-label="Palette menu"><Icon name="menu3" size={12} weight={1.3} /></IconButton>
              </PaletteSearch>
              {palette.map(([group, items]) => (
                <React.Fragment key={group}>
                  <PaletteGroup><Icon name="chevron" size={11} weight={2} />{group}</PaletteGroup>
                  <ul>{items.map(([label, icon]) => <PaletteItem key={label}><Icon name={icon} weight={1.3} />{label}</PaletteItem>)}</ul>
                </React.Fragment>
              ))}
            </Palette>
            <Canvas />
            <Properties />
            <SideTabs $right><SideLabel active>Properties</SideLabel></SideTabs>
          </Body>
        </Editor>
      </Workspace>
      <StatusBar>
        {[["Audits", "messages"], ["Find in Files", "search"], ["Logs", "logs"], ["Trace", "trace"], ["Tests", "flask"], ["Git History", "clock"]].map(([label, icon]) => (
          <button key={label}><Icon name={icon} size={14} weight={1.4} />{label}</button>
        ))}
      </StatusBar>
      <Taskbar>
        <Task aria-label="Start"><Icon name="windows" size={20} /></Task>
        <Task aria-label="Search"><Icon name="taskSearch" size={20} weight={1} /></Task>
        <Task $run aria-label="File Explorer">{art.explorer}</Task>
        <Task aria-label="Mail">{art.mail}</Task>
        <Task aria-label="L">{art.line}</Task>
        <Task $run $active aria-label="Edge">{art.edge}</Task>
        <Task $run aria-label="Visual Studio">{art.studio}</Task>
        <Task $run aria-label="Spotify"><FaSpotify size={19} color="#1ed760" /></Task>
        <Task $run aria-label="Photos">{art.photos}</Task>
        <Tray>
          <Weather>
            <Icon name="news" size={30} weight={1} />
            <span>29°C</span>
            <span>Cerah</span>
          </Weather>
          <Icon name="chevronUp" size={17} weight={1} />
          <Icon name="battery" size={20} weight={1} />
          <Icon name="wifi" size={18} weight={1} />
          <Icon name="speaker" size={20} weight={1} />
          <time>12:52</time>
          <NoticeButton aria-label="Notifications"><Icon name="notice" size={20} weight={1} /></NoticeButton>
          <PeekLine />
        </Tray>
      </Taskbar>
    </Page>
  );
}
